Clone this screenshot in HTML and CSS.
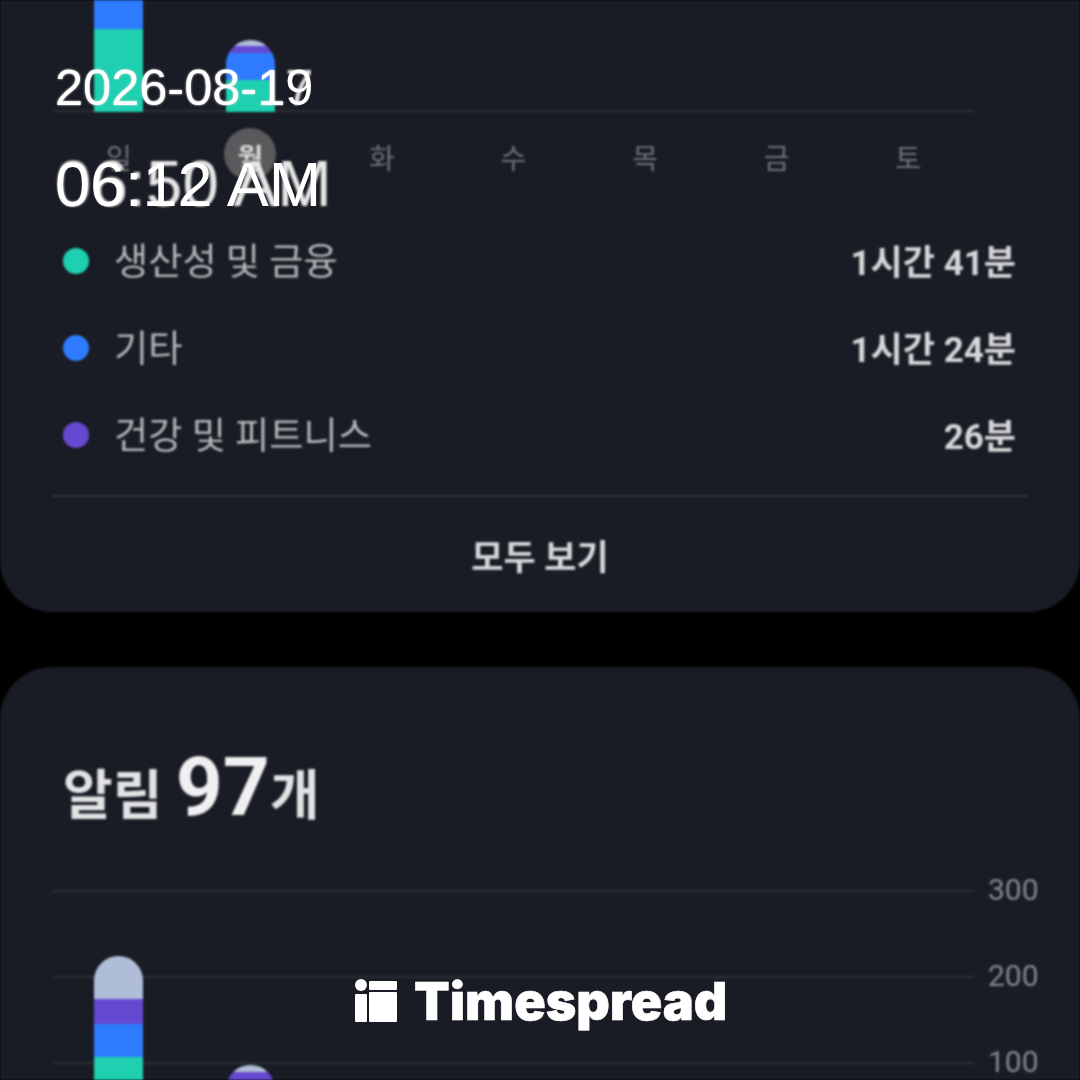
FILE: index.html
```html
<!DOCTYPE html>
<html lang="ko">
<head>
<meta charset="UTF-8">
<title>Timespread</title>
<link rel="stylesheet" href="styles.css">
</head>
<body>
<div class="screen">
  <section class="card card-usage">
    <div class="week-chart">
      <div class="col"><div class="bar bar-cut"><i class="seg blue h29"></i><i class="seg teal grow"></i></div></div>
      <div class="col"><div class="bar bar-small"><i class="seg light h6"></i><i class="seg purple h7"></i><i class="seg blue h27"></i><i class="seg teal grow"></i></div></div>
      <div class="col"></div>
      <div class="col"></div>
      <div class="col"></div>
      <div class="col"></div>
      <div class="col"></div>
    </div>
    <div class="days">
      <span>일</span>
      <span class="today">월</span>
      <span>화</span>
      <span>수</span>
      <span>목</span>
      <span>금</span>
      <span>토</span>
    </div>
    <ul class="legend">
      <li><i class="dot teal"></i><span class="name">생산성 및 금융</span><b>1시간 41분</b></li>
      <li><i class="dot blue"></i><span class="name">기타</span><b>1시간 24분</b></li>
      <li><i class="dot purple"></i><span class="name">건강 및 피트니스</span><b>26분</b></li>
    </ul>
    <div class="see-all">모두 보기</div>
  </section>

  <section class="card card-alerts">
    <h2 class="alert-title">알림 <strong>97</strong>개</h2>
    <div class="alert-chart">
      <div class="line-row"><i></i><span>300</span></div>
      <div class="line-row"><i></i><span>200</span></div>
      <div class="line-row"><i></i><span>100</span></div>
      <div class="alert-bars">
        <div class="col"><div class="bar bar-tall"><i class="seg light h43"></i><i class="seg purple h25"></i><i class="seg blue h33"></i><i class="seg teal h60"></i></div></div>
        <div class="col"><div class="bar bar-low"><i class="seg light h7"></i><i class="seg purple h25"></i></div></div>
      </div>
    </div>
  </section>

  <div class="ghost-stamp">
    <div class="date">2026-08-17</div>
    <div class="time">06:50 AM</div>
  </div>
</div>

<div class="stamp">
  <div class="date">2026-08-19</div>
  <div class="time">06:12 AM</div>
</div>

<div class="brand">
  <svg class="brand-icon" width="44" height="44" viewBox="0 0 44 44">
    <circle cx="7" cy="6" r="6" fill="#fff"/>
    <rect x="1" y="15" width="12" height="28" rx="1" fill="#fff"/>
    <rect x="15" y="2" width="28" height="9" rx="1" fill="#fff"/>
    <rect x="15" y="13" width="28" height="30" rx="1" fill="#fff"/>
  </svg>
  <span class="brand-name">Timespread</span>
</div>
</body>
</html>
```

FILE: styles.css
```css
* {
  box-sizing: border-box;
}

html, body {
  margin: 0;
  width: 1080px;
  height: 1080px;
  overflow: hidden;
  background-color: #000;
}

body {
  position: relative;
  font-family: "Roboto", "Noto Sans CJK KR", sans-serif;
}

.screen {
  position: relative;
  width: 1080px;
  height: 1080px;
  overflow: hidden;
  filter: blur(1.3px);
}

.card {
  background-color: #191c24;
  padding: 0 53px;
}

.card-usage {
  height: 612px;
  border-radius: 0 0 52px 52px;
}

.card-alerts {
  height: 413px;
  margin-top: 55px;
  border-radius: 52px 52px 0 0;
}

/* weekly chart */
.week-chart {
  display: grid;
  grid-template-columns: repeat(7, 1fr);
  width: 921px;
  height: 112px;
  border-bottom: 2px solid #2c2f36;
}

.col {
  display: flex;
  justify-content: center;
  align-items: flex-end;
}

.bar {
  display: flex;
  flex-direction: column;
  width: 49px;
  overflow: hidden;
}

.bar-cut {
  height: 112px;
  margin-bottom: -2px;
}

.bar-small {
  height: 72px;
  margin-bottom: -2px;
  border-radius: 25px 25px 0 0;
}

.seg {
  display: block;
  flex-shrink: 0;
}

.grow { flex: 1; }
.h6 { height: 6px; }
.h7 { height: 7px; }
.h25 { height: 25px; }
.h27 { height: 27px; }
.h29 { height: 29px; }
.h33 { height: 33px; }
.h43 { height: 43px; }
.h60 { height: 60px; }

.teal { background-color: #1ecfb0; }
.blue { background-color: #2f7bff; }
.purple { background-color: #6549d0; }
.light { background-color: #afbdd9; }

.days {
  display: grid;
  grid-template-columns: repeat(7, 1fr);
  width: 921px;
  height: 52px;
  margin-top: 16px;
  font-size: 28px;
  color: #6f7177;
}

.days span {
  display: flex;
  justify-content: center;
  align-items: center;
  padding-top: 6px;
}

.days .today {
  justify-self: center;
  width: 52px;
  height: 52px;
  border-radius: 50%;
  background-color: #5a5a5c;
  color: #d8d8d8;
  font-weight: 700;
}

/* legend */
.legend {
  list-style: none;
  margin: 37px 0 0;
  padding: 0 11px 0 10px;
}

.legend li {
  display: flex;
  align-items: center;
  height: 87px;
  font-size: 37.2px;
}

.dot {
  width: 26px;
  height: 26px;
  border-radius: 50%;
  margin-right: 25px;
}

.name {
  flex: 1;
  padding-bottom: 3px;
  color: #b4b5b8;
}

.legend b {
  padding-bottom: 2px;
  font-size: 35px;
  font-weight: 700;
  color: #d6d7d9;
}

.see-all {
  margin-top: 17px;
  border-top: 2px solid #33353b;
  height: 117px;
  display: flex;
  justify-content: center;
  align-items: center;
  font-size: 35px;
  font-weight: 700;
  color: #d6d7d9;
}

/* alerts */
.alert-title {
  margin: 0;
  padding: 70px 0 0 10px;
  height: 181px;
  font-size: 54px;
  line-height: 100px;
  font-weight: 700;
  color: #e2e3e5;
  white-space: nowrap;
}

.alert-title strong {
  font-size: 82px;
  font-weight: 700;
  color: #f0f0f2;
}

.alert-chart {
  position: relative;
}

.line-row {
  display: flex;
  align-items: center;
  height: 86px;
}

.line-row i {
  display: block;
  flex-shrink: 0;
  width: 921px;
  height: 2px;
  background-color: #2c2f36;
}

.line-row span {
  margin-left: 14px;
  padding-bottom: 3px;
  font-size: 30px;
  color: #85878c;
}

.alert-bars {
  position: absolute;
  top: 0;
  left: 0;
  display: grid;
  grid-template-columns: repeat(7, 131.57px);
  width: 921px;
}

.alert-bars .col {
  align-items: flex-start;
}

.bar-tall {
  margin-top: 108px;
  height: 161px;
  border-radius: 25px 25px 0 0;
}

.bar-low {
  margin-top: 217px;
  height: 32px;
  border-radius: 25px 25px 0 0;
}

/* date and time stamped over the picture */
.stamp,
.ghost-stamp {
  position: absolute;
  top: 0;
  left: 55px;
  font-family: "Liberation Sans", Arial, sans-serif;
  color: #fff;
  white-space: nowrap;
}

.ghost-stamp {
  color: #e6e6e6;
}

.date {
  position: absolute;
  top: 59px;
  left: 0;
  font-size: 50.5px;
  line-height: 58px;
}

.time {
  position: absolute;
  top: 147px;
  left: 0;
  font-size: 63px;
  line-height: 74px;
}

.ghost-stamp .time {
  font-size: 65.5px;
}

/* watermark */
.brand {
  position: absolute;
  left: 354px;
  top: 971px;
  display: flex;
  align-items: center;
  gap: 16px;
  height: 60px;
  color: #fff;
}

.brand-name {
  font-family: "Inter", sans-serif;
  font-size: 52px;
  font-weight: 900;
  -webkit-text-stroke: 0.6px #fff;
}
```
